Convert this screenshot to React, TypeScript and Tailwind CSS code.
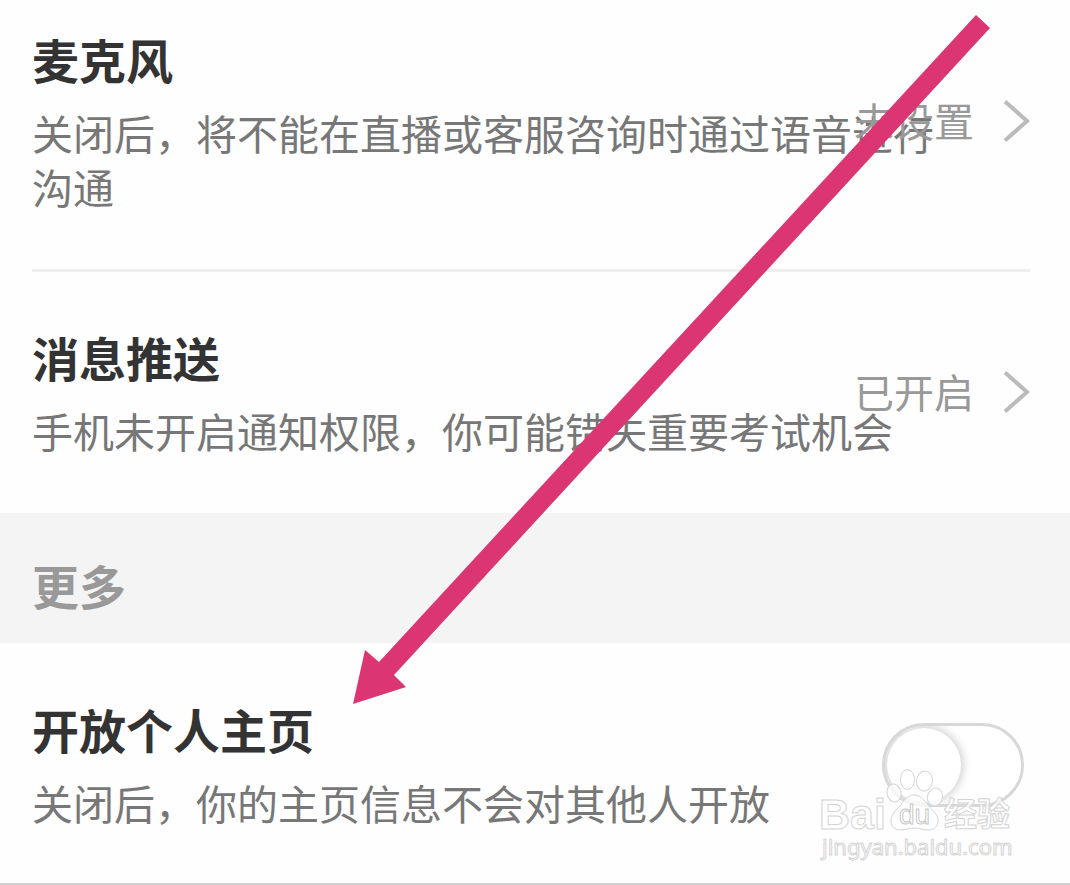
import { useState, type ReactNode } from "react";

interface SettingTextProps {
	title: string;
	description: string;
	htmlFor?: string;
}

function SettingText({ title, description, htmlFor }: Readonly<SettingTextProps>) {
	return (
		<div className="flex flex-col gap-3.5 pr-21">
			<h2 className="text-[47px] leading-16 font-bold text-[#333]">
				{htmlFor ? <label htmlFor={htmlFor}>{title}</label> : title}
			</h2>
			<p className="text-[41px] leading-[54px] text-[#777]">{description}</p>
		</div>
	);
}

interface LinkRowProps {
	title: string;
	description: string;
	status: string;
	className?: string;
}

function LinkRow({
	title,
	description,
	status,
	className = "",
}: Readonly<LinkRowProps>) {
	return (
		<a href="#" className={`relative block pb-14 ${className}`}>
			<SettingText title={title} description={description} />
			{/* The status may run over a long description */}
			<RowEnd className={className}>
				<span className="text-[40px] leading-[54px] text-[#999]">{status}</span>
				<svg
					className="h-12 w-7"
					viewBox="0 0 28 48"
					fill="none"
					stroke="#bbb"
					strokeWidth={4}
					aria-hidden="true"
				>
					<path d="M3 5.500L25 25L3 44.500" />
				</svg>
			</RowEnd>
		</a>
	);
}

function RowEnd({
	className,
	children,
}: Readonly<{ className: string; children: ReactNode }>) {
	return (
		<div
			className={`absolute inset-y-0 right-0 flex items-center gap-7 pb-14 ${className}`}
		>
			{children}
		</div>
	);
}

/** Long arrow pointing at the profile switch title */
function Arrow() {
	return (
		<svg
			className="pointer-events-none absolute top-3 left-[350px] h-[696px] w-[644px]"
			viewBox="350 12 644 696"
			aria-hidden="true"
		>
			<polygon
				fill="#dc3573"
				points="353,704 365,650 379,662 976,15 990,28 394,675 406,687"
			/>
		</svg>
	);
}

function Watermark() {
	return (
		<svg
			className="pointer-events-none absolute right-12 bottom-5 h-[100px] w-[206px]"
			viewBox="816 765 206 100"
			fill="#fff"
			fillOpacity={0.75}
			stroke="#d4d4d4"
			strokeWidth={1}
			aria-hidden="true"
		>
			<text
				x="819"
				y="831"
				className="font-['Liberation_Sans',sans-serif] text-[43px] font-bold"
			>
				Bai
			</text>
			<ellipse cx="894" cy="795" rx="7" ry="9" transform="rotate(-12 894 795)" />
			<ellipse cx="907.500" cy="781.500" rx="7" ry="10" />
			<ellipse cx="924.500" cy="783" rx="8" ry="10" transform="rotate(8 924 783)" />
			<ellipse cx="935" cy="799" rx="7.500" ry="9" transform="rotate(14 935 799)" />
			<path d="M914 797C907 797 904 803 899 809C894 814 891 818 891 823C891 829 895 832 901 832C906 832 909 830 914 830C919 830 923 832 928 832C935 832 938 828 938 822C938 816 932 812 928 807C924 802 921 797 914 797Z" />
			<text
				x="899"
				y="826"
				stroke="#c8c8c8"
				className="font-['Liberation_Sans',sans-serif] text-[28px]"
			>
				du
			</text>
			<text
				x="944"
				y="828"
				className="font-['Noto_Sans_CJK_SC',sans-serif] text-[33px] font-bold"
			>
				经验
			</text>
			<text
				x="822"
				y="857"
				className="font-['Noto_Sans',sans-serif] text-[22px]"
			>
				jingyan.baidu.com
			</text>
		</svg>
	);
}

export default function App() {
	const [open, setOpen] = useState(false);

	return (
		<main className="relative overflow-hidden border-b-2 border-[#d0d0d0] bg-[#fefefe] font-['Noto_Sans_CJK_SC',sans-serif]">
			<div className="pr-10 pl-8">
				<LinkRow
					className="pt-[27px]"
					title="麦克风"
					description="关闭后，将不能在直播或客服咨询时通过语音进行沟通"
					status="未设置"
				/>
				<hr className="border-t-3 border-[#eee]" />
				<LinkRow
					className="pt-[53px]"
					title="消息推送"
					description="手机未开启通知权限，你可能错失重要考试机会"
					status="已开启"
				/>
			</div>

			<h1 className="bg-[#f4f4f4] pt-10 pr-10 pb-[26px] pl-8 text-[47px] leading-16 font-bold text-[#999]">
				更多
			</h1>

			<div className="relative pt-[54px] pr-10 pb-[54px] pl-8">
				<SettingText
					htmlFor="open-profile"
					title="开放个人主页"
					description="关闭后，你的主页信息不会对其他人开放"
				/>
				<div className="absolute inset-y-0 right-[46px] flex items-center pt-1">
					<input
						id="open-profile"
						type="checkbox"
						role="switch"
						checked={open}
						onChange={(e) => setOpen(e.target.checked)}
						className="flex h-21 w-[142px] appearance-none items-center overflow-hidden rounded-full border-3 border-[#d8d8d8] bg-white before:ml-0.5 before:h-[74px] before:w-[74px] before:rounded-full before:bg-white before:shadow-[0_0_10px_2px_rgba(0,0,0,0.2)] checked:bg-green-500 checked:before:translate-x-15"
					/>
				</div>
			</div>

			<Arrow />
			<Watermark />
		</main>
	);
}
